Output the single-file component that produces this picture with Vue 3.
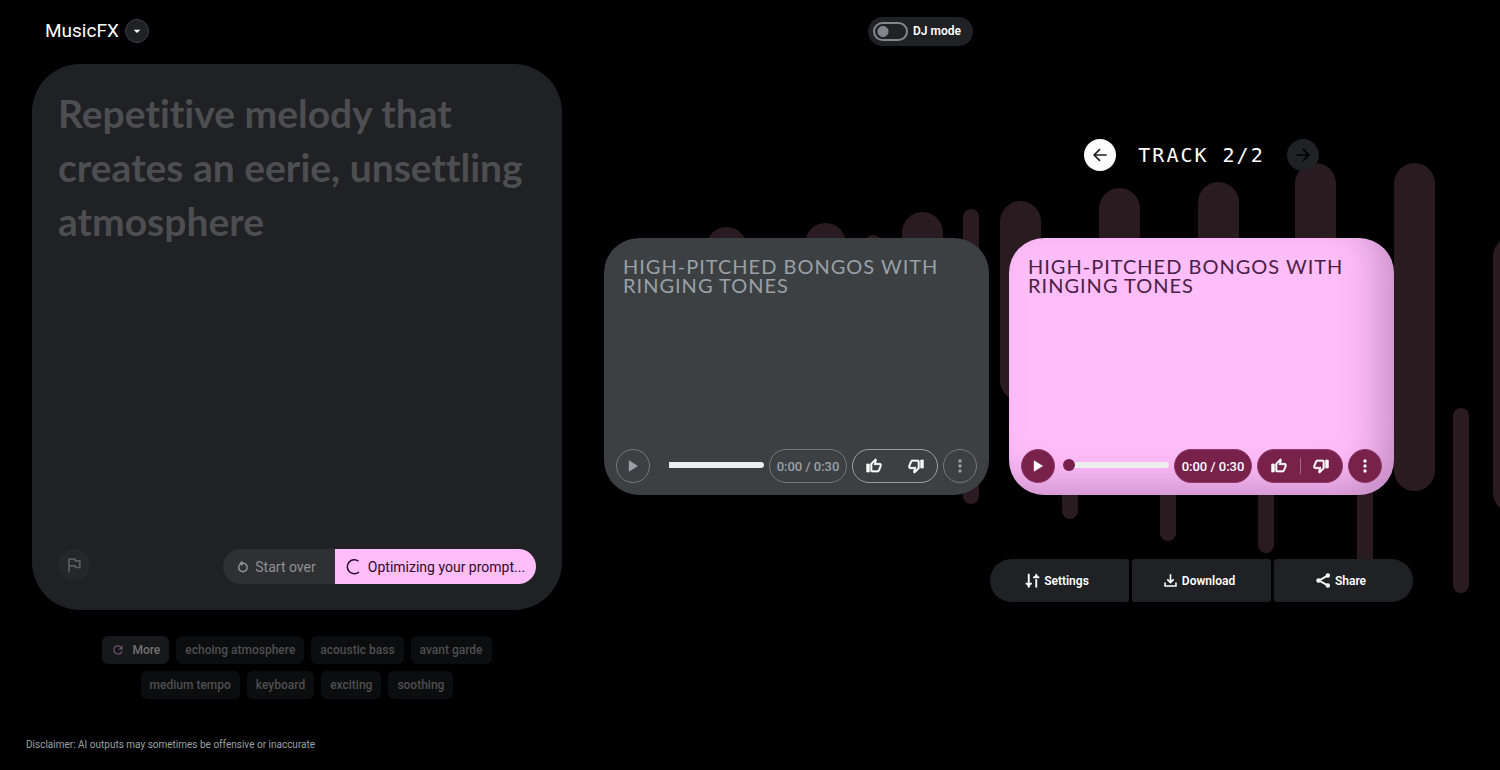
<template>
  <div class="page">
    <header class="topbar">
      <div class="brand">
        <h1>MusicFX</h1>
        <button class="brand-menu" type="button" aria-label="Switch tool">
          <svg viewBox="0 0 24 24" width="16" height="16"><path fill="currentColor" d="M7 10l5 5 5-5z" /></svg>
        </button>
      </div>
      <div class="mode">
        <label class="dj-toggle">
          <input v-model="djMode" type="checkbox" />
          <span>DJ mode</span>
        </label>
      </div>
    </header>

    <main class="workspace">
      <section class="composer">
        <div class="panel">
          <textarea v-model="prompt" class="prompt" aria-label="Prompt" spellcheck="false" readonly></textarea>
          <div class="panel-footer">
            <button class="flag" type="button" aria-label="Report">
              <svg viewBox="0 0 24 24" width="20" height="20"><path fill="currentColor" :d="icons.flag" /></svg>
            </button>
            <div class="panel-actions">
              <button class="start-over" type="button">
                <svg class="stroke" viewBox="0 0 24 24" width="12" height="12">
                  <path d="M7 6A8.500 8.500 0 1 0 13 4.500H7M11 1L7 4.500l4 4" />
                </svg>
                Start over
              </button>
              <button class="generate" type="button">
                <svg class="spinner" viewBox="0 0 16 16" width="16" height="16">
                  <path d="M12.500 2.200A7 7 0 1 0 13 13" />
                </svg>
                Optimizing your prompt...
              </button>
            </div>
          </div>
        </div>

        <div class="chips">
          <button class="chip more" type="button">
            <svg viewBox="0 0 24 24" width="14" height="14"><path fill="currentColor" :d="icons.refresh" /></svg>
            More
          </button>
          <button v-for="chip in chips" :key="chip" class="chip" type="button">{{ chip }}</button>
        </div>
      </section>

      <section class="stage">
        <svg class="waves" viewBox="0 0 896 706" width="896" height="706" aria-hidden="true">
          <rect
            v-for="bar in bars"
            :key="bar.x"
            :x="bar.x"
            :y="bar.top"
            :width="bar.w"
            :height="bar.bottom - bar.top"
            :rx="bar.w / 2"
          />
        </svg>

        <nav class="track-nav" aria-label="Tracks">
          <button class="arrow" type="button" aria-label="Previous track">
            <svg class="stroke thin" viewBox="0 0 24 24" width="20" height="20"><path d="M20 12H5M12 5l-7 7 7 7" /></svg>
          </button>
          <span class="track-label">TRACK 2/2</span>
          <button class="arrow off" type="button" aria-label="Next track">
            <svg class="stroke thin" viewBox="0 0 24 24" width="20" height="20"><path d="M4 12h15M12 5l7 7-7 7" /></svg>
          </button>
        </nav>

        <article v-for="track in tracks" :key="track.id" class="card" :class="{ active: track.active }">
          <h2>{{ track.title }}</h2>
          <div class="player">
            <button class="pill round" type="button" aria-label="Play">
              <svg viewBox="0 0 24 24" width="20" height="20"><path fill="currentColor" d="M7 5v14l11-7z" /></svg>
            </button>
            <input v-model="track.position" class="seek" type="range" min="0" max="30" aria-label="Position" />
            <span class="pill time">0:00 / 0:30</span>
            <div class="pill votes">
              <button type="button" aria-label="Good track">
                <svg class="bold" viewBox="0 0 24 24" width="16" height="16"><path :d="icons.up" /></svg>
              </button>
              <i class="divider"></i>
              <button type="button" aria-label="Bad track">
                <svg class="bold" viewBox="0 0 24 24" width="16" height="16"><path :d="icons.down" /></svg>
              </button>
            </div>
            <button class="pill round" type="button" aria-label="More options">
              <svg viewBox="0 0 24 24" width="20" height="20"><path fill="currentColor" :d="icons.dots" /></svg>
            </button>
          </div>
        </article>

        <div class="actions">
          <button type="button">
            <svg class="stroke" viewBox="0 0 24 24" width="15" height="15">
              <path d="M6 1v22M1 17h10M18 10v13M13 7h10M18 2v5" />
              <path fill="currentColor" stroke="none" d="M2 17h8l-4 6zM14 7h8l-4-6z" />
            </svg>
            Settings
          </button>
          <button type="button">
            <svg viewBox="0 0 24 24" width="15" height="15"><path fill="currentColor" :d="icons.download" /></svg>
            Download
          </button>
          <button type="button">
            <svg class="stroke" viewBox="0 0 24 24" width="15" height="15">
              <path d="M17 5L5 12l12 7" />
              <circle cx="19" cy="4" r="2" />
              <circle cx="4" cy="12" r="2" />
              <circle cx="19" cy="20" r="2" />
            </svg>
            Share
          </button>
        </div>
      </section>
    </main>

    <footer class="disclaimer">Disclaimer: AI outputs may sometimes be offensive or inaccurate</footer>
  </div>
</template>

<script setup>
import { ref } from 'vue'

const djMode = ref(false)
const prompt = ref('Repetitive melody that creates an eerie, unsettling atmosphere')

const chips = [
  'echoing atmosphere',
  'acoustic bass',
  'avant garde',
  'medium tempo',
  'keyboard',
  'exciting',
  'soothing'
]

const tracks = ref([
  { id: 1, title: 'HIGH-PITCHED BONGOS WITH RINGING TONES', position: 0, active: false },
  { id: 2, title: 'HIGH-PITCHED BONGOS WITH RINGING TONES', position: 0, active: true }
])

// waveform behind the cards, measured from the stage's top left corner
const bars = [
  { x: 102, top: 163, bottom: 300, w: 41 },
  { x: 201, top: 159, bottom: 300, w: 41 },
  { x: 261, top: 171, bottom: 300, w: 16 },
  { x: 298, top: 148, bottom: 300, w: 41 },
  { x: 359, top: 145, bottom: 440, w: 16 },
  { x: 396, top: 137, bottom: 337, w: 41 },
  { x: 458, top: 260, bottom: 455, w: 16 },
  { x: 495, top: 124, bottom: 340, w: 41 },
  { x: 556, top: 260, bottom: 477, w: 16 },
  { x: 594, top: 118, bottom: 340, w: 41 },
  { x: 654, top: 260, bottom: 489, w: 16 },
  { x: 691, top: 99, bottom: 340, w: 41 },
  { x: 753, top: 260, bottom: 520, w: 16 },
  { x: 790, top: 99, bottom: 427, w: 41 },
  { x: 849, top: 344, bottom: 529, w: 16 },
  { x: 889, top: 172, bottom: 449, w: 41 }
]

const icons = {
  flag: 'M12.360 6l.4 2H18v6h-3.360l-.4-2H7V6h5.360M14 4H5v17h2v-7h5.600l.4 2h7V6h-5.600L14 4z',
  refresh:
    'M17.650 6.350A7.960 7.960 0 0 0 12 4a8 8 0 1 0 7.730 10h-2.080A6 6 0 1 1 12 6c1.660 0 3.140.69 4.220 1.780L13 11h7V4z',
  up: 'M9 21h9c.83 0 1.540-.5 1.840-1.220l3.020-7.050c.09-.23.14-.47.14-.73v-2c0-1.100-.9-2-2-2h-6.310l.95-4.570.03-.32c0-.41-.17-.79-.44-1.060L14.170 1 7.580 7.590C7.220 7.950 7 8.450 7 9v10c0 1.100.9 2 2 2zM9 9l4.340-4.340L12 10h9v2l-3 7H9V9zM1 9h4v12H1z',
  down: 'M15 3H6c-.83 0-1.540.5-1.840 1.220l-3.020 7.050c-.09.23-.14.47-.14.73v2c0 1.100.9 2 2 2h6.310l-.95 4.570-.03.32c0 .41.17.79.44 1.060L9.830 23l6.590-6.590c.36-.36.58-.86.58-1.410V5c0-1.100-.9-2-2-2zm0 12l-4.340 4.340L12 14H3v-2l3-7h9v10zm4-12h4v12h-4V3z',
  dots: 'M12 8a2 2 0 1 0 0-4 2 2 0 0 0 0 4zm0 2a2 2 0 1 0 0 4 2 2 0 0 0 0-4zm0 6a2 2 0 1 0 0 4 2 2 0 0 0 0-4z',
  download:
    'M12 17l-6-6 1.800-1.800L10.700 12V2h2.600v10l2.900-2.800L18 11zM2 22v-7h2.600v4.400h14.800V15H22v7z'
}
</script>

<style>
body {
  margin: 0;
  background: #000;
}
</style>

<style scoped>
.page {
  display: flex;
  flex-direction: column;
  min-height: 100vh;
  overflow: hidden;
  background: #000;
  color: #fff;
  font-family: Roboto, sans-serif;
}
button {
  display: inline-flex;
  align-items: center;
  justify-content: center;
  box-sizing: border-box;
  margin: 0;
  padding: 0;
  border: 0;
  background: none;
  color: inherit;
  font: inherit;
  cursor: pointer;
}
svg {
  flex: none;
}
.stroke,
.spinner {
  overflow: visible;
  fill: none;
  stroke: currentColor;
  stroke-width: 3;
}
.thin {
  stroke-width: 2;
}
.spinner {
  stroke-width: 1.500;
}
.bold {
  overflow: visible;
  fill: currentColor;
  stroke: currentColor;
  stroke-width: 1;
}

/* header */
.topbar,
.workspace {
  display: grid;
  grid-template-columns: minmax(0, 530fr) minmax(0, 896fr);
  column-gap: 42px;
  padding-left: 32px;
}
.topbar {
  height: 62px;
  padding-bottom: 2px;
  align-items: center;
}
.brand {
  display: flex;
  align-items: center;
  gap: 6px;
  padding-left: 13px;
}
.brand h1 {
  margin: 0;
  font-size: 19px;
  font-weight: 400;
  line-height: 24px;
}
.brand-menu {
  width: 24px;
  height: 24px;
  border: 1px solid #3c4043;
  border-radius: 50%;
  background: #202124;
}
.mode {
  padding-left: 264px;
}
.dj-toggle {
  display: inline-flex;
  align-items: center;
  gap: 5px;
  height: 29px;
  padding: 0 12px 0 5px;
  border-radius: 15px;
  background: #202124;
  font-size: 12px;
  font-weight: 600;
}
.dj-toggle input {
  appearance: none;
  box-sizing: border-box;
  width: 35px;
  height: 19px;
  margin: 0;
  border: 2px solid #80868b;
  border-radius: 10px;
  background: radial-gradient(circle at 8px 50%, #80868b 5px, transparent 6px);
}

/* prompt */
.workspace {
  flex: 1;
}
.composer {
  display: flex;
  flex-direction: column;
}
.panel {
  flex: 1;
  display: flex;
  flex-direction: column;
  padding: 22px 26px 26px;
  border-radius: 48px;
  background: #202124;
}
.prompt {
  flex: 1;
  width: 100%;
  margin: 0;
  padding: 0;
  border: 0;
  outline: 0;
  resize: none;
  overflow: hidden;
  background: none;
  color: #4d4e51;
  font: 700 39px/54px Lato, sans-serif;
  font-variant-ligatures: none;
}
.panel-footer {
  display: flex;
  align-items: flex-start;
  justify-content: space-between;
}
.flag {
  width: 32px;
  height: 32px;
  border-radius: 50%;
  background: #26272a;
  color: #5a5c5f;
}
.panel-actions {
  display: flex;
  height: 35px;
  border-radius: 18px;
  overflow: hidden;
  font-size: 14px;
}
.start-over {
  gap: 6px;
  width: 112px;
  padding-right: 5px;
  background: #2f3033;
  color: #909194;
}
.generate {
  gap: 6px;
  width: 201px;
  background: #ffbdfa;
  color: #2b0b2c;
}

.chips {
  display: flex;
  flex-wrap: wrap;
  justify-content: center;
  gap: 7px;
  padding: 26px 56px 0;
}
.chip {
  height: 28px;
  padding: 0 9px;
  border-radius: 6px;
  background: #0c0d0e;
  color: #4e4f52;
  font-size: 12px;
  font-weight: 500;
}
.chip.more {
  gap: 7px;
  background: #17181a;
  color: #707174;
}
.chip.more svg {
  color: #72526f;
}

/* tracks */
.stage {
  position: relative;
  display: grid;
  grid-template-columns: minmax(0, 1fr) minmax(0, 1fr);
  align-content: start;
  column-gap: 20px;
  padding: 75px 106px 0 0;
}
.waves {
  position: absolute;
  top: 0;
  left: 0;
  overflow: visible;
  fill: #2a1b21;
}
.track-nav,
.card,
.actions {
  position: relative;
}
.track-nav {
  grid-column: 2;
  display: flex;
  align-items: center;
  justify-content: center;
  gap: 22px;
}
.track-label {
  font: 400 20px/24px 'DejaVu Sans Mono', monospace;
  letter-spacing: 2px;
}
.arrow {
  width: 32px;
  height: 32px;
  border-radius: 50%;
  background: #fff;
  color: #202124;
}
.arrow.off {
  background: #202124;
  color: #000;
}
.card {
  display: flex;
  flex-direction: column;
  justify-content: space-between;
  box-sizing: border-box;
  min-height: 257px;
  margin: 67px 0 64px;
  padding: 19px 12px 12px;
  border-radius: 35px;
  background: #3c4043;
  color: #9aa0a6;
}
.card.active {
  background: #ffbdfa;
  box-shadow: inset -20px -16px 40px -8px rgba(80, 40, 90, 0.34);
  color: #4a2046;
}
.card h2 {
  margin: 0;
  padding: 0 7px;
  font: 400 20px/19px Lato, sans-serif;
  letter-spacing: 1px;
}
.player {
  display: flex;
  align-items: center;
  gap: 5px;
}
.pill {
  display: flex;
  flex: none;
  align-items: center;
  justify-content: center;
  box-sizing: border-box;
  height: 34px;
  border: 1px solid #74787c;
  border-radius: 17px;
}
.round {
  width: 34px;
}
.time {
  width: 78px;
  font-size: 13px;
  font-weight: 500;
}
.votes {
  justify-content: space-evenly;
  width: 86px;
  border-color: #9aa0a6;
  color: #fff;
}
.divider {
  width: 1px;
  height: 16px;
}
.active .pill {
  border-color: #8f3a68;
  background: #78214b;
  color: #fff;
}
.active .divider {
  background: #a8688a;
}
.seek {
  appearance: none;
  flex: 1;
  min-width: 0;
  height: 12px;
  margin: 0 0 3px 3px;
  background: none;
}
.seek::-webkit-slider-runnable-track {
  height: 6px;
  border-radius: 3px;
  background: linear-gradient(90deg, transparent 11px, #eeeeee 11px);
}
.seek::-webkit-slider-thumb {
  appearance: none;
  width: 12px;
  height: 12px;
  margin-top: -3px;
  border-radius: 50%;
  background: transparent;
}
.active .seek::-webkit-slider-thumb {
  background: #78214b;
}

.actions {
  grid-column: 2;
  justify-self: center;
  display: flex;
  gap: 3px;
  border-radius: 22px;
  overflow: hidden;
}
.actions button {
  gap: 4px;
  width: 139px;
  height: 43px;
  padding-right: 5px;
  border-radius: 3px;
  background: #202124;
  font-size: 12px;
  font-weight: 600;
}

.disclaimer {
  padding: 38px 26px 18px;
  color: #9aa0a6;
  font-size: 10px;
  line-height: 15px;
}
</style>
